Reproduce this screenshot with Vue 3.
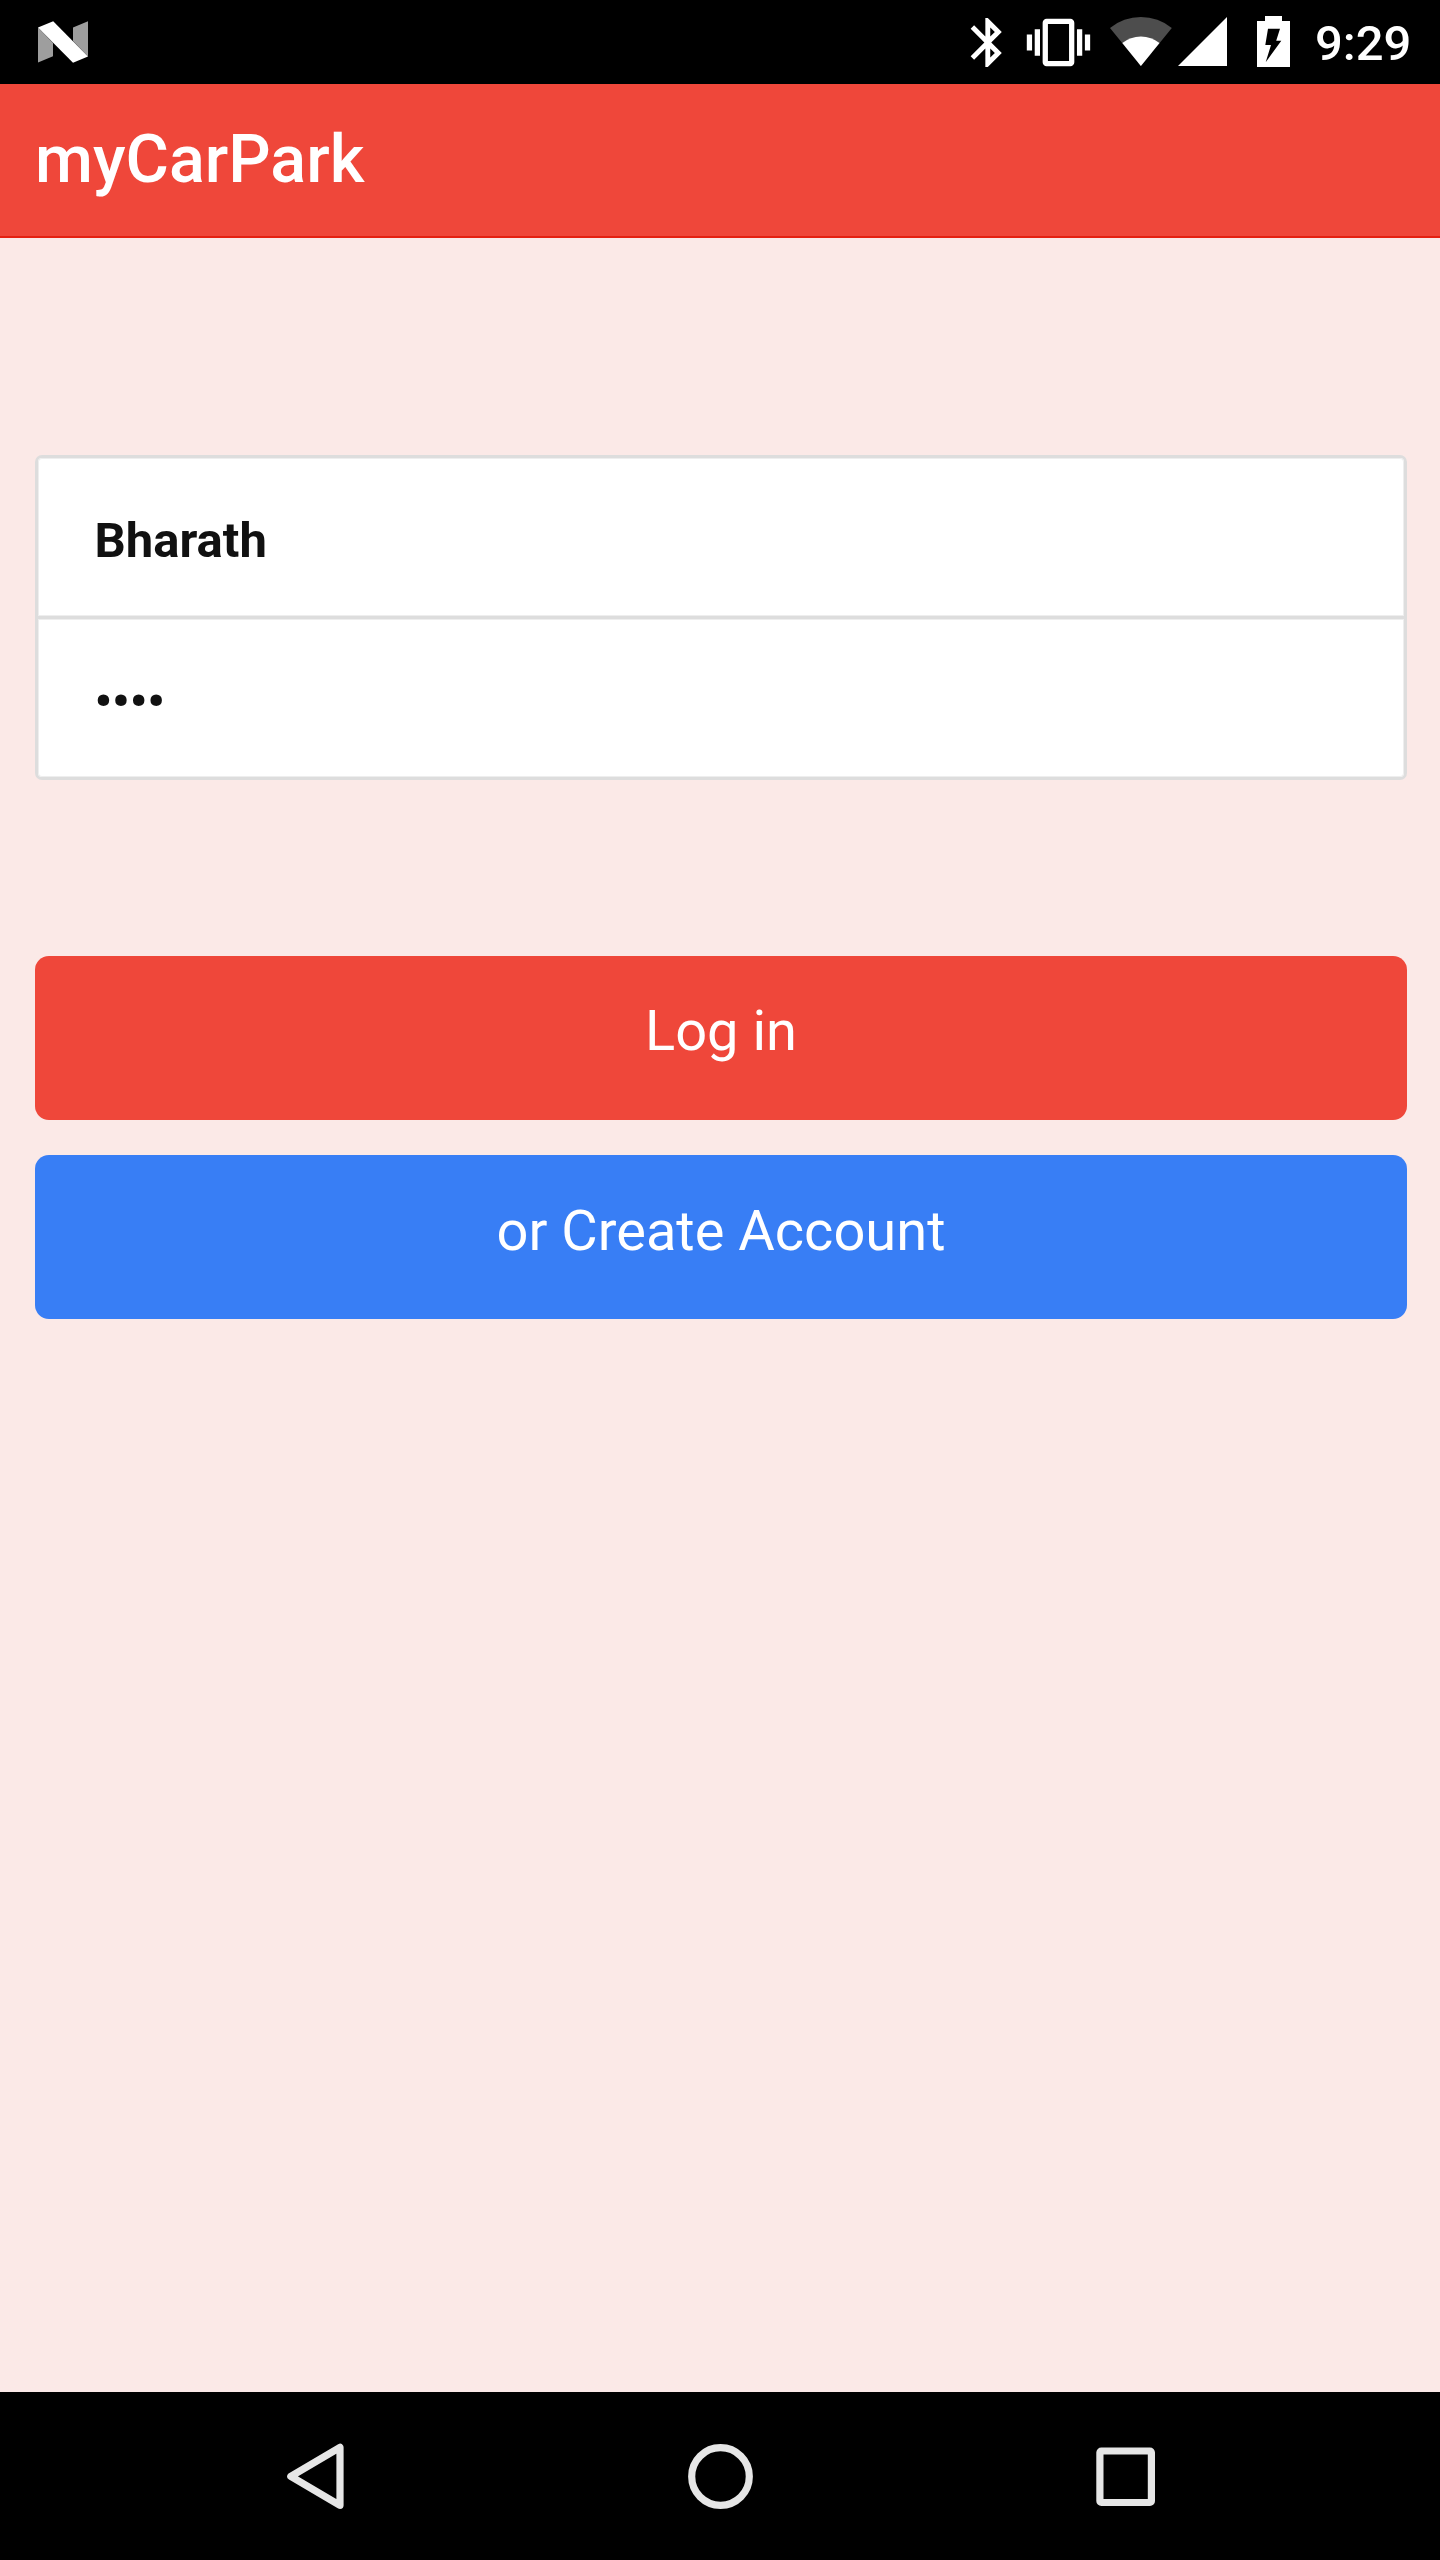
<script setup>
import { ref } from 'vue'

const username = ref('Bharath')
const password = ref('••••')
const time = '9:29'
</script>

<template>
  <div class="screen">
    <div class="status">
      <svg class="notif" width="54" height="84" viewBox="36 0 54 84">
        <path fill="#9e9e9e" d="M38 27.5L53 43V56.3L38 62.6zM73 27.5L88 21.2V56.5L73 41z" />
        <path fill="#fff" d="M38 27.5L53.2 21.2L88 56.5L73 62.8z" />
      </svg>
      <svg width="32" height="84" viewBox="970 0 32 84">
        <path
          transform="translate(958.4 13.1) scale(2.45)"
          fill="#fff"
          d="M17.71 7.71L12 2h-1v7.59L6.41 5 5 6.41 10.59 12 5 17.59 6.41 19 11 14.41V22h1l5.71-5.71-4.3-4.29 4.3-4.29zM13 5.83l1.88 1.88L13 9.59V5.83zm1.88 10.46L13 18.17v-3.76l1.88 1.88z"
        />
      </svg>
      <svg class="vibrate" width="65" height="84" viewBox="1026 0 65 84">
        <path
          transform="translate(1026.8 10.8) scale(2.64)"
          fill="#fff"
          d="M0 15h2V9H0v6zm3 2h2V7H3v10zm19-8v6h2V9h-2zm-3 8h2V7h-2v10zM16.5 3h-9C6.67 3 6 3.67 6 4.5v15c0 .83.67 1.5 1.5 1.5h9c.83 0 1.5-.67 1.5-1.5v-15c0-.83-.67-1.5-1.5-1.5zM16 19H8V5h8v14z"
        />
      </svg>
      <svg class="wifi" width="64" height="84" viewBox="1109 0 64 84">
        <path fill="#4d4d4d" d="M1140.9 66L1110 28A49 49 0 0 1 1171.8 28z" />
        <path fill="#fff" d="M1140.9 66L1122.3 43.1A29.5 29.5 0 0 1 1159.5 43.1z" />
      </svg>
      <svg class="signal" width="50" height="84" viewBox="1177 0 50 84">
        <path fill="#fff" d="M1178 66H1227V17z" />
      </svg>
      <svg class="battery" width="33" height="84" viewBox="1257 0 33 84">
        <path
          fill="#fff"
          fill-rule="evenodd"
          d="M1257 21H1265V16H1282V21H1290V67H1257zM1268 28.8L1265.3 45H1271L1265.7 62.3L1281.3 40.8H1276.2L1280 28.8z"
        />
      </svg>
      <span class="time">{{ time }}</span>
    </div>

    <header class="bar"><h1>myCarPark</h1></header>

    <main class="content">
      <div class="fields">
        <div class="field user">{{ username }}</div>
        <div class="field pass">{{ password }}</div>
      </div>
      <div class="actions">
        <button class="btn login">Log in</button>
        <button class="btn create">or Create Account</button>
      </div>
    </main>

    <nav class="nav">
      <svg width="60" height="168" viewBox="286 2392 60 168">
        <path d="M340 2447.4V2505.3L290.8 2476.4z" />
      </svg>
      <svg class="home" width="68" height="168" viewBox="686 2392 68 168">
        <circle cx="720.5" cy="2476.5" r="28.8" />
      </svg>
      <svg class="recent" width="60" height="168" viewBox="1095 2392 60 168" overflow="visible">
        <rect x="1099.9" y="2451" width="51.5" height="51.5" rx="1.5" />
      </svg>
    </nav>
  </div>
</template>

<style>
body {
  margin: 0;
}
</style>

<style scoped>
.screen {
  width: 1440px;
  height: 2560px;
  display: flex;
  flex-direction: column;
  background: #fbe9e7;
  font-family: Roboto, sans-serif;
  overflow: hidden;
}
svg {
  display: block;
  flex: none;
}
.status {
  height: 84px;
  flex: none;
  display: flex;
  background: #000;
  color: #fff;
  padding-left: 36px;
}
.notif {
  margin-right: 880px;
}
.vibrate {
  margin-left: 24px;
}
.wifi {
  margin-left: 18px;
}
.signal {
  margin-left: 4px;
}
.battery {
  margin-left: 30px;
}
.time {
  margin-left: 25px;
  font-size: 49px;
  font-weight: 500;
  line-height: 88px;
  white-space: nowrap;
}
.bar {
  height: 154px;
  flex: none;
  box-sizing: border-box;
  background: #ef473a;
  border-bottom: 2px solid #e42112;
  padding-left: 35px;
}
h1 {
  margin: 0;
  color: #fff;
  font-size: 66.5px;
  font-weight: 500;
  line-height: 150px;
}
.content {
  flex: 1;
  padding: 217px 33px 0 35px;
}
.fields {
  border: 3px solid #ddd;
  border-radius: 7px;
  background: #fff;
  height: 325px;
  box-sizing: border-box;
  display: flex;
  flex-direction: column;
}
.field {
  box-sizing: border-box;
  padding-left: 56.5px;
  color: #111;
  font-size: 49px;
  font-weight: 700;
  box-shadow: inset 0 0 0 1px #eee;
}
.user {
  height: 158px;
  line-height: 166px;
  border-radius: 4px 4px 0 0;
}
.pass {
  height: 161px;
  line-height: 165px;
  border-top: 3px solid #ddd;
  border-radius: 0 0 4px 4px;
}
.actions {
  margin-top: 175.5px;
  display: flex;
  flex-direction: column;
  gap: 35px;
}
.btn {
  height: 164.5px;
  border: 0;
  border-radius: 14px;
  padding: 0 0 14px;
  color: #fff;
  font: 400 56px/150px Roboto, sans-serif;
}
.login {
  background: #ef473a;
}
.create {
  height: 164px;
  padding-bottom: 12px;
  background: #387ef5;
}
.nav {
  height: 168px;
  flex: none;
  box-sizing: border-box;
  display: flex;
  padding-left: 286px;
  background: #000;
}
.home {
  margin-left: 340px;
}
.recent {
  margin-left: 341px;
}
.nav svg {
  fill: none;
  stroke: #e6e6e6;
  stroke-width: 7.2;
  stroke-linejoin: round;
}
</style>
